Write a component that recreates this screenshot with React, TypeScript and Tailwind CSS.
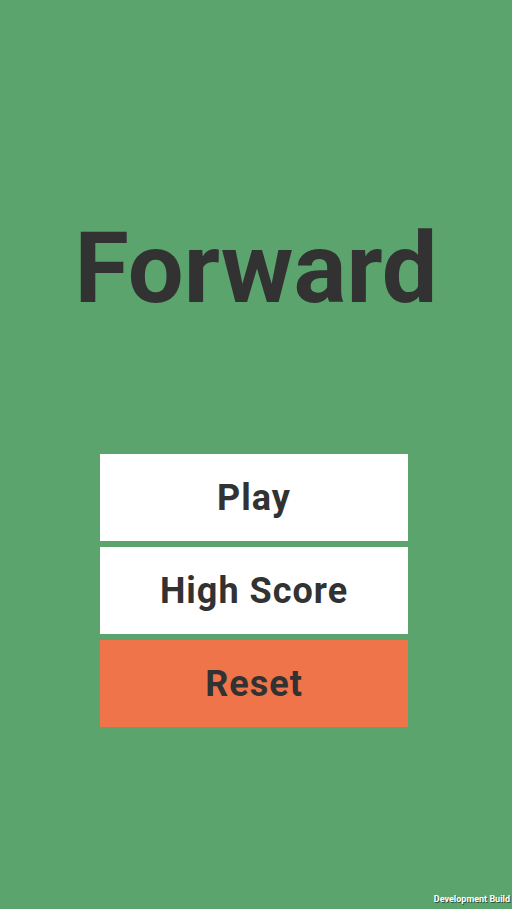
export default function App() {
  const buttons = [
    { label: "Play", bg: "bg-white" },
    { label: "High Score", bg: "bg-white" },
    { label: "Reset", bg: "bg-[#f0744a]" },
  ];

  return (
    <div
      className="relative flex h-[909px] w-full flex-col items-center bg-[#5ba46d] text-[#323232]"
      style={{ fontFamily: "Roboto, 'Noto Sans', sans-serif" }}
    >
      <h1 className="mt-[219px] text-[99px] font-bold leading-none">Forward</h1>

      <div className="mr-[4px] mt-[136px] flex w-[308px] flex-col gap-[6px]">
        {buttons.map(({ label, bg }) => (
          <div key={label} className={`flex h-[87px] items-center justify-center ${bg}`}>
            <span className="text-[36px] font-bold tracking-[1px]">{label}</span>
          </div>
        ))}
      </div>

      {/* build badge */}
      <span className="absolute bottom-[3px] right-[2px] text-[9px] font-bold text-white [text-shadow:1px_1px_0_rgba(0,0,0,0.5)]">
        Development Build
      </span>
    </div>
  );
}
